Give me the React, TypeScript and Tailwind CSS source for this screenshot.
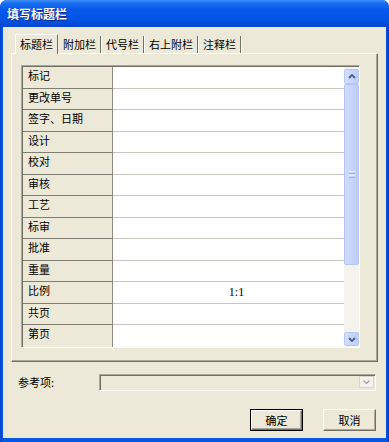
import React from "react";

const labels = [
  "标记",
  "更改单号",
  "签字、日期",
  "设计",
  "校对",
  "审核",
  "工艺",
  "标审",
  "批准",
  "重量",
  "比例",
  "共页",
  "第页",
];

function Chevron({ up }: { up?: boolean }) {
  return (
    <svg width="8" height="5" viewBox="0 0 8 5" className="block">
      <path
        d={up ? "M1 4 L4 1 L7 4" : "M1 1 L4 4 L7 1"}
        fill="none"
        stroke="#4d6185"
        strokeWidth="1.8"
      />
    </svg>
  );
}

export default function App() {
  return (
    <div
      className="w-[389px] h-[442px] flex flex-col rounded-t-[7px] overflow-hidden bg-[linear-gradient(to_right,#0840d0,#0458e6_3px,#0458e6_386px,#0636c8)]"
      style={{ fontFamily: "'Noto Sans CJK SC', 'Noto Sans', sans-serif" }}
    >
      {/* title bar */}
      <div className="h-[27px] shrink-0 flex items-center pl-[7px] bg-[linear-gradient(to_bottom,#3d8ef8_0%,#1a6ff0_12%,#0758ec_35%,#0355e6_70%,#0449d6_92%,#0a45c8_100%)]">
        <span className="text-white font-bold text-[12px] leading-none [text-shadow:1px_1px_0_#0a2a8a]">
          填写标题栏
        </span>
      </div>

      {/* body */}
      <div className="flex-1 mx-[3px] mb-[4px] bg-[#ece9d8] flex flex-col text-[11px] text-black leading-none">
        {/* tabs */}
        <div className="h-[26px] shrink-0 pl-[12px] flex items-end">
          <div className="h-[20px] px-[4px] flex items-center border-t border-l border-white border-r border-r-[#716f64] relative top-[1px] bg-[#ece9d8] z-10">
            标题栏
          </div>
          {["附加栏", "代号栏", "右上附栏", "注释栏"].map((t) => (
            <div
              key={t}
              className="h-[17px] px-[4px] flex items-center border-r border-r-[#716f64] shadow-[1px_0_0_#ffffff]"
            >
              <span className="pl-[1px]">{t}</span>
            </div>
          ))}
        </div>

        {/* panel */}
        <div className="mx-[8px] h-[309px] shrink-0 border-t border-l border-white border-r border-b border-r-[#716f64] border-b-[#716f64] shadow-[inset_-1px_-1px_0_#aca899] pt-[11px] pl-[9px]">
          {/* grid */}
          <div className="w-[339px] h-[283px] flex border-t border-l border-t-[#aca899] border-l-[#aca899] border-b border-r border-b-white border-r-white shadow-[inset_1px_1px_0_#716f64] pt-[1px] pl-[1px]">
            <div className="flex-1 flex flex-col">
              {labels.map((l, i) => (
                <div
                  key={l}
                  className={
                    "flex-1 flex " +
                    (i < labels.length - 1 ? "" : "")
                  }
                >
                  <div
                    className={
                      "w-[90px] shrink-0 bg-[#ece9d8] border-r border-r-[#8c8a7e] pl-[5px] pt-[3px] " +
                      (i < labels.length - 1 ? "border-b border-b-[#807e72]" : "")
                    }
                  >
                    {l}
                  </div>
                  <div
                    className={
                      "flex-1 bg-white flex items-center justify-center pl-[16px] " +
                      (i < labels.length - 1 ? "border-b border-b-[#c9c7c0]" : "")
                    }
                  >
                    {l === "比例" ? (
                      <span className="font-['Liberation_Serif',serif] text-[12px] relative top-[-1px]">
                        1:1
                      </span>
                    ) : null}
                  </div>
                </div>
              ))}
            </div>
            {/* scrollbar */}
            <div className="w-[15px] shrink-0 flex flex-col bg-[#f4f3ee] pt-[2px] pb-[1px]">
              <div className="h-[15px] shrink-0 rounded-[2px] border border-[#b7c8f2] bg-[linear-gradient(to_right,#d2dffc,#bccdf8)] flex items-center justify-center">
                <Chevron up />
              </div>
              <div className="h-[181px] shrink-0 rounded-[2px] border border-[#b3c5f3] bg-[linear-gradient(to_right,#cfdcfc,#bccdf9)] flex flex-col items-center justify-center gap-[1px]">
                <div className="w-[6px] h-[1px] bg-[#eef3ff]" />
                <div className="w-[6px] h-[1px] bg-[#9db4ea]" />
                <div className="w-[6px] h-[1px] bg-[#eef3ff]" />
                <div className="w-[6px] h-[1px] bg-[#9db4ea]" />
              </div>
              <div className="flex-1" />
              <div className="h-[14px] shrink-0 rounded-[2px] border border-[#b7c8f2] bg-[linear-gradient(to_right,#d2dffc,#bccdf8)] flex items-center justify-center">
                <Chevron />
              </div>
            </div>
          </div>
        </div>

        {/* reference row */}
        <div className="mt-[12px] h-[16px] shrink-0 flex items-center">
          <div className="w-[96px] pl-[15px] shrink-0">参考项:</div>
          <div className="w-[277px] h-[17px] border-t border-l border-t-[#aca899] border-l-[#aca899] border-b border-r border-b-white border-r-white shadow-[inset_1px_1px_0_#716f64] bg-[#ece9d8] flex justify-end items-center pr-[1px]">
            <div className="w-[15px] h-[12px] border border-[#d8d6cc] bg-[#f3f2ec] flex items-center justify-center">
              <svg width="7" height="4" viewBox="0 0 7 4">
                <path d="M0.5 0.5 L3.5 3.5 L6.5 0.5" fill="none" stroke="#aca899" strokeWidth="1.4" />
              </svg>
            </div>
          </div>
        </div>

        {/* buttons */}
        <div className="mt-[19px] h-[22px] shrink-0 flex justify-end gap-[20px] pr-[10px]">
          <div className="w-[53px] h-[22px] border border-black flex">
            <div className="flex-1 border-t border-l border-white border-b border-r border-b-[#716f64] border-r-[#716f64] shadow-[inset_-1px_-1px_0_#aca899] bg-[#ece9d8] flex items-center justify-center">
              确定
            </div>
          </div>
          <div className="w-[53px] h-[22px] border-t border-l border-white border-b border-r border-b-[#716f64] border-r-[#716f64] shadow-[inset_-1px_-1px_0_#aca899] bg-[#ece9d8] flex items-center justify-center">
            取消
          </div>
        </div>
      </div>
    </div>
  );
}
